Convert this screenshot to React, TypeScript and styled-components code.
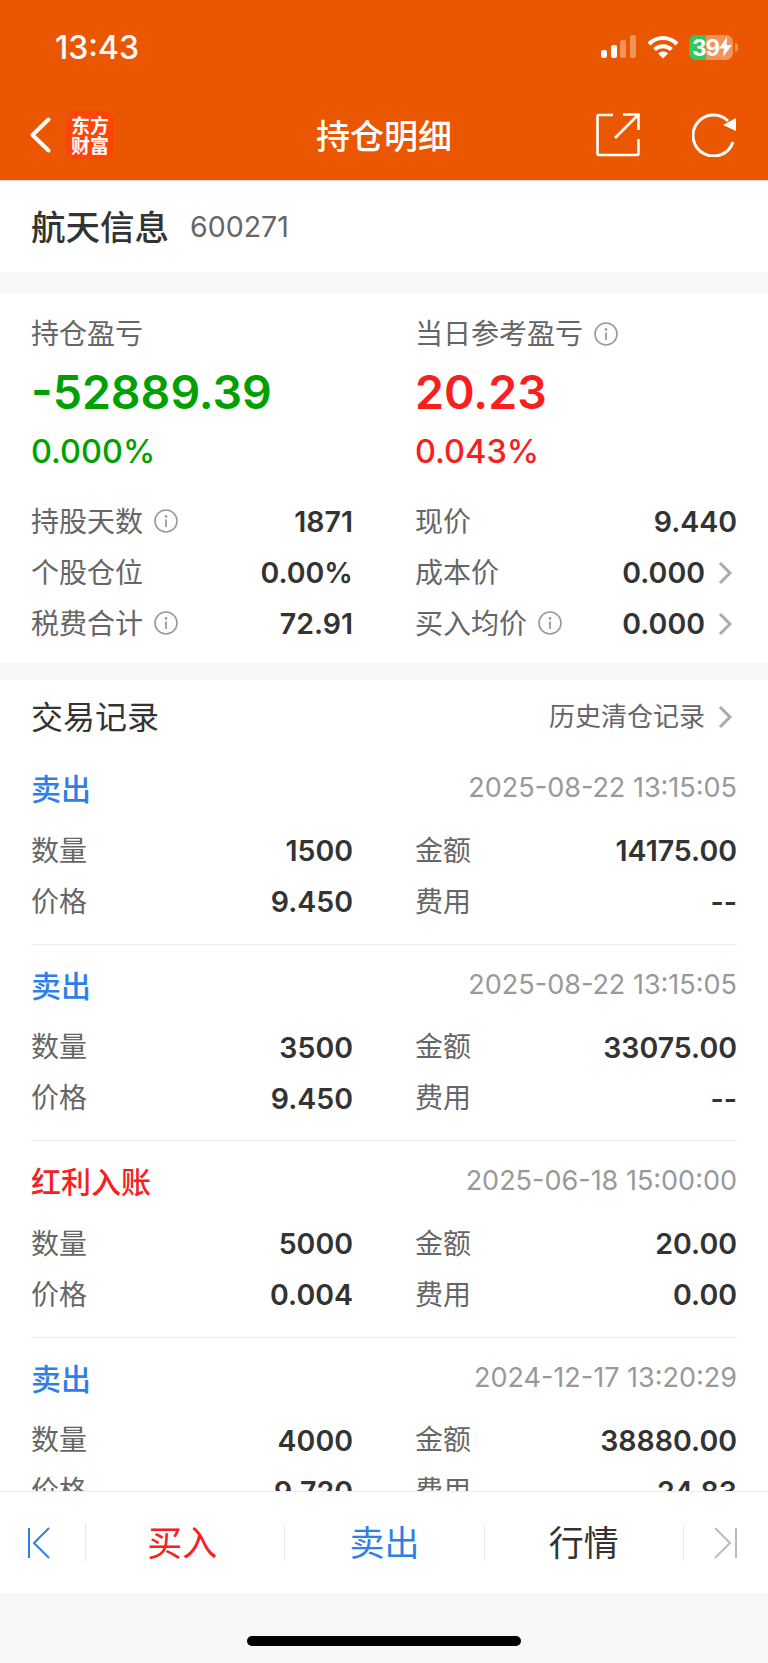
import styled, { createGlobalStyle } from 'styled-components';

const GlobalStyle = createGlobalStyle`
  html, body {
    margin: 0;
    padding: 0;
    background: #f6f7f9;
  }
  * {
    box-sizing: border-box;
  }
`;

const FONT = `Inter, 'Noto Sans CJK SC', sans-serif`;
const CJK = `'Noto Sans CJK SC', sans-serif`;

const Page = styled.div`
  width: 768px;
  height: 1663px;
  display: flex;
  flex-direction: column;
  overflow: hidden;
  background: #f6f7f9;
  font-family: ${FONT};
`;

const Header = styled.header`
  flex: none;
  height: 181px;
  background: #eb5600;
  border-bottom: 1px solid #f6d9c7;
  color: #fff;
`;

const StatusBar = styled.div`
  height: 90px;
  padding: 31px 30px 0 55px;
  display: flex;
  justify-content: space-between;
  align-items: flex-start;
`;

const Clock = styled.div`
  font-size: 32px;
  line-height: 34px;
  font-weight: 500;
`;

const StatusIcons = styled.div`
  display: flex;
  align-items: center;
  height: 30px;
  margin-top: 1px;
  gap: 10px;
  padding-right: 5px;
`;

const Battery = styled.div`
  position: relative;
  width: 44px;
  height: 25px;
  border-radius: 7px;
  background: linear-gradient(to right, #34c759 39%, rgba(255, 255, 255, 0.36) 39%);
  display: flex;
  align-items: center;
  padding-left: 3px;
  font-size: 22.5px;
  line-height: 25px;
  font-weight: 700;
  letter-spacing: -1px;

  &::after {
    content: '';
    position: absolute;
    right: -5px;
    top: 8px;
    width: 3px;
    height: 9px;
    border-radius: 0 3px 3px 0;
    background: rgba(255, 255, 255, 0.36);
  }
`;

const BoltGlyph = styled.svg`
  flex: none;
`;

const NavBar = styled.div`
  position: relative;
  height: 90px;
  padding: 0 32px 0 29px;
  display: flex;
  align-items: center;
  justify-content: space-between;
`;

const NavSide = styled.div<{ $gap: number }>`
  display: flex;
  align-items: center;
  gap: ${(props) => props.$gap}px;
`;

const NavTitle = styled.h1`
  position: absolute;
  left: 0;
  right: 0;
  top: 23px;
  margin: 0;
  text-align: center;
  font-family: ${CJK};
  font-size: 34px;
  line-height: 44px;
  font-weight: 500;
`;

const Logo = styled.div`
  width: 48px;
  height: 48px;
  border-radius: 10px;
  background: #ff4408;
  display: flex;
  align-items: center;
  justify-content: center;
  text-align: center;
  font-family: ${CJK};
  font-size: 19px;
  line-height: 20px;
  font-weight: 700;
`;

const NameBar = styled.section`
  flex: none;
  height: 91px;
  padding: 0 31px;
  margin-bottom: 21px;
  background: #fff;
  display: flex;
  align-items: center;
  gap: 21px;
`;

const StockName = styled.div`
  padding-bottom: 4px;
  font-family: ${CJK};
  font-size: 34.5px;
  font-weight: 500;
  color: #333;
`;

const StockCode = styled.div`
  font-size: 28.5px;
  color: #666;
`;

const Summary = styled.section`
  flex: none;
  height: 370px;
  margin-bottom: 17px;
  padding: 23px 31px 0;
  background: #fff;
`;

const Columns = styled.div`
  display: grid;
  grid-template-columns: 322px 322px;
  column-gap: 62px;
`;

const Label = styled.span`
  display: flex;
  align-items: center;
  gap: 11px;
  padding-bottom: 4px;
  font-family: ${CJK};
  font-size: 28px;
  color: #666;
`;

const Headline = styled.div`
  height: 36px;
  display: flex;
  align-items: center;
`;

const BigValue = styled.div<{ $color: string }>`
  margin-top: 11px;
  height: 58px;
  line-height: 58px;
  font-size: 46.5px;
  font-weight: 600;
  color: ${(props) => props.$color};
`;

const Percent = styled.div<{ $color: string }>`
  margin-top: 1px;
  height: 60px;
  line-height: 60px;
  font-size: 32.5px;
  font-weight: 500;
  color: ${(props) => props.$color};
`;

const StatList = styled.div`
  margin-top: 14px;
`;

const StatRow = styled.div`
  height: 51px;
  display: flex;
  align-items: center;
  justify-content: space-between;
`;

const Value = styled.span`
  display: flex;
  align-items: center;
  gap: 13px;
  font-size: 28.5px;
  font-weight: 600;
  color: #333;
`;

const ChevronSlot = styled.span`
  display: flex;
  margin-right: 5px;
`;

const Trades = styled.section`
  flex: 1;
  min-height: 0;
  overflow: hidden;
  padding: 0 31px;
  background: #fff;
`;

const TradesHead = styled.div`
  height: 68px;
  padding-top: 2px;
  display: flex;
  align-items: center;
  justify-content: space-between;
`;

const TradesTitle = styled.div`
  font-family: ${CJK};
  font-size: 32px;
  color: #333;
`;

const HistoryLink = styled.div`
  display: flex;
  align-items: center;
  gap: 13px;
  padding-top: 3px;
  font-family: ${CJK};
  font-size: 26px;
  color: #666;
`;

const HistoryText = styled.span`
  padding-bottom: 4px;
`;

const Trade = styled.article`
  height: 196.5px;
  padding-top: 16px;
  border-bottom: 1px solid #eee;
`;

const TradeTop = styled.div`
  height: 46px;
  margin-bottom: 15px;
  display: flex;
  align-items: center;
  justify-content: space-between;
`;

const TradeType = styled.div<{ $color: string }>`
  font-family: ${CJK};
  font-size: 30px;
  font-weight: 500;
  color: ${(props) => props.$color};
`;

const TradeTime = styled.div`
  padding-top: 1px;
  font-size: 27px;
  color: #999;
`;

const BottomBar = styled.nav`
  flex: none;
  height: 102px;
  background: #fff;
  border-top: 1px solid #eee;
  display: flex;
  align-items: center;
`;

const BarCell = styled.div<{ $edge?: boolean }>`
  flex: ${(props) => (props.$edge ? '0 0 85px' : '1 1 0')};
  height: 36px;
  display: flex;
  align-items: center;
  justify-content: center;
  border-left: 1px solid #e6e6e6;

  &:first-child {
    border-left: none;
  }
`;

const BarLabel = styled.span<{ $color?: string; $nudge?: number }>`
  margin-right: ${(props) => props.$nudge ?? 0}px;
  padding-bottom: 4px;
  font-family: ${CJK};
  font-size: 35px;
  color: ${(props) => props.$color ?? '#333'};
`;

const HomeArea = styled.div`
  flex: none;
  height: 70px;
  padding-top: 43px;
  display: flex;
  justify-content: center;
  background: #f6f7f9;
`;

const HomeIndicator = styled.div`
  width: 274px;
  height: 10px;
  border-radius: 5px;
  background: #000;
`;

const InfoGlyph = styled.svg`
  margin-top: 3px;
`;

const InfoIcon = () => (
  <InfoGlyph width="24" height="24" viewBox="0 0 24 24" fill="none">
    <circle cx="12" cy="12" r="11" stroke="#999" strokeWidth="1.6" />
    <circle cx="12" cy="7.4" r="1.3" fill="#999" />
    <path d="M12 10.500V18" stroke="#999" strokeWidth="1.8" />
  </InfoGlyph>
);

const Chevron = () => (
  <ChevronSlot>
    <svg width="14" height="24" viewBox="0 0 14 24" fill="none">
      <path d="M2 2l10 10L2 22" stroke="#aaa" strokeWidth="3" />
    </svg>
  </ChevronSlot>
);

const SignalIcon = () => (
  <svg width="36" height="24" viewBox="0 0 36 24" fill="#fff">
    <rect x="0" y="15" width="6" height="8" rx="2" />
    <rect x="10" y="10" width="6" height="13" rx="2" />
    <rect x="19" y="5" width="6" height="18" rx="2" opacity=".36" />
    <rect x="29" y="0" width="6" height="23" rx="2" opacity=".36" />
  </svg>
);

const WifiIcon = () => (
  <svg width="32" height="24" viewBox="0 0 32 24" fill="none" stroke="#fff" strokeWidth="4">
    <path d="M2 9C10 1 22 1 30 9" />
    <path d="M7.500 14.500C12 10 20 10 24.500 14.500" />
    <path d="M16 23.500l-5-5c3-2.600 7-2.600 10 0z" fill="#fff" stroke="none" />
  </svg>
);

const BoltIcon = () => (
  <BoltGlyph width="13" height="20" viewBox="0 0 13 20" fill="#fff">
    <path d="M8 0L0 11.500h5L4 20l9-12H7.600z" />
  </BoltGlyph>
);

const BackIcon = () => (
  <svg width="22" height="36" viewBox="0 0 22 36" fill="none">
    <path d="M19.500 2.500L3.500 18l16 15.500" stroke="#fff" strokeWidth="4" strokeLinecap="round" strokeLinejoin="round" />
  </svg>
);

const ShareIcon = () => (
  <svg width="44" height="44" viewBox="0 0 44 44" fill="none" stroke="#fff" strokeWidth="2.6">
    <path d="M17 2H3a1.500 1.500 0 0 0-1.500 1.500v37A1.500 1.500 0 0 0 3 42h38a1.500 1.500 0 0 0 1.500-1.500V26" />
    <path d="M19 25L42 2" />
    <path d="M27 1.500h15.500V17" />
  </svg>
);

const RefreshIcon = () => (
  <svg width="44" height="44" viewBox="0 0 44 44" fill="none">
    <path d="M41 29A20.500 20.500 0 1 1 36 8" stroke="#fff" strokeWidth="3" />
    <path d="M44 5V18L31 12z" fill="#fff" />
  </svg>
);

const FirstIcon = () => (
  <svg width="30" height="32" viewBox="0 0 30 32" fill="none" stroke="#2e7fe8" strokeWidth="2">
    <path d="M1 1v30" />
    <path d="M21 1L6 16l15 15" />
  </svg>
);

const LastIcon = () => (
  <svg width="26" height="32" viewBox="0 0 26 32" fill="none" stroke="#bbb" strokeWidth="2">
    <path d="M23 1v30" />
    <path d="M2 1l15 15L2 31" />
  </svg>
);

const BLUE = '#2e7fe8';
const RED = '#f7201f';
const GREEN = '#00a000';

const trades = [
  { type: '卖出', color: BLUE, time: '2025-08-22 13:15:05', qty: '1500', amount: '14175.00', price: '9.450', fee: '--' },
  { type: '卖出', color: BLUE, time: '2025-08-22 13:15:05', qty: '3500', amount: '33075.00', price: '9.450', fee: '--' },
  { type: '红利入账', color: RED, time: '2025-06-18 15:00:00', qty: '5000', amount: '20.00', price: '0.004', fee: '0.00' },
  { type: '卖出', color: BLUE, time: '2024-12-17 13:20:29', qty: '4000', amount: '38880.00', price: '9.720', fee: '24.83' },
];

const App = () => {
  return (
    <Page>
      <GlobalStyle />
      <Header>
        <StatusBar>
          <Clock>13:43</Clock>
          <StatusIcons>
            <SignalIcon />
            <WifiIcon />
            <Battery>
              39
              <BoltIcon />
            </Battery>
          </StatusIcons>
        </StatusBar>
        <NavBar>
          <NavSide $gap={15}>
            <BackIcon />
            <Logo>
              东方
              <br />
              财富
            </Logo>
          </NavSide>
          <NavTitle>持仓明细</NavTitle>
          <NavSide $gap={52}>
            <ShareIcon />
            <RefreshIcon />
          </NavSide>
        </NavBar>
      </Header>

      <NameBar>
        <StockName>航天信息</StockName>
        <StockCode>600271</StockCode>
      </NameBar>

      <Summary>
        <Columns>
          <div>
            <Headline>
              <Label>持仓盈亏</Label>
            </Headline>
            <BigValue $color={GREEN}>-52889.39</BigValue>
            <Percent $color={GREEN}>0.000%</Percent>
          </div>
          <div>
            <Headline>
              <Label>
                当日参考盈亏
                <InfoIcon />
              </Label>
            </Headline>
            <BigValue $color={RED}>20.23</BigValue>
            <Percent $color={RED}>0.043%</Percent>
          </div>
        </Columns>
        <StatList>
          <Columns>
            <StatRow>
              <Label>
                持股天数
                <InfoIcon />
              </Label>
              <Value>1871</Value>
            </StatRow>
            <StatRow>
              <Label>现价</Label>
              <Value>9.440</Value>
            </StatRow>
            <StatRow>
              <Label>个股仓位</Label>
              <Value>0.00%</Value>
            </StatRow>
            <StatRow>
              <Label>成本价</Label>
              <Value>
                0.000
                <Chevron />
              </Value>
            </StatRow>
            <StatRow>
              <Label>
                税费合计
                <InfoIcon />
              </Label>
              <Value>72.91</Value>
            </StatRow>
            <StatRow>
              <Label>
                买入均价
                <InfoIcon />
              </Label>
              <Value>
                0.000
                <Chevron />
              </Value>
            </StatRow>
          </Columns>
        </StatList>
      </Summary>

      <Trades>
        <TradesHead>
          <TradesTitle>交易记录</TradesTitle>
          <HistoryLink>
            <HistoryText>历史清仓记录</HistoryText>
            <Chevron />
          </HistoryLink>
        </TradesHead>
        {trades.map((trade) => (
          <Trade key={trade.qty}>
            <TradeTop>
              <TradeType $color={trade.color}>{trade.type}</TradeType>
              <TradeTime>{trade.time}</TradeTime>
            </TradeTop>
            <Columns>
              <StatRow>
                <Label>数量</Label>
                <Value>{trade.qty}</Value>
              </StatRow>
              <StatRow>
                <Label>金额</Label>
                <Value>{trade.amount}</Value>
              </StatRow>
              <StatRow>
                <Label>价格</Label>
                <Value>{trade.price}</Value>
              </StatRow>
              <StatRow>
                <Label>费用</Label>
                <Value>{trade.fee}</Value>
              </StatRow>
            </Columns>
          </Trade>
        ))}
      </Trades>

      <BottomBar>
        <BarCell $edge>
          <FirstIcon />
        </BarCell>
        <BarCell>
          <BarLabel $color={RED} $nudge={6}>
            买入
          </BarLabel>
        </BarCell>
        <BarCell>
          <BarLabel $color={BLUE}>卖出</BarLabel>
        </BarCell>
        <BarCell>
          <BarLabel>行情</BarLabel>
        </BarCell>
        <BarCell $edge>
          <LastIcon />
        </BarCell>
      </BottomBar>
      <HomeArea>
        <HomeIndicator />
      </HomeArea>
    </Page>
  );
};

export default App;
